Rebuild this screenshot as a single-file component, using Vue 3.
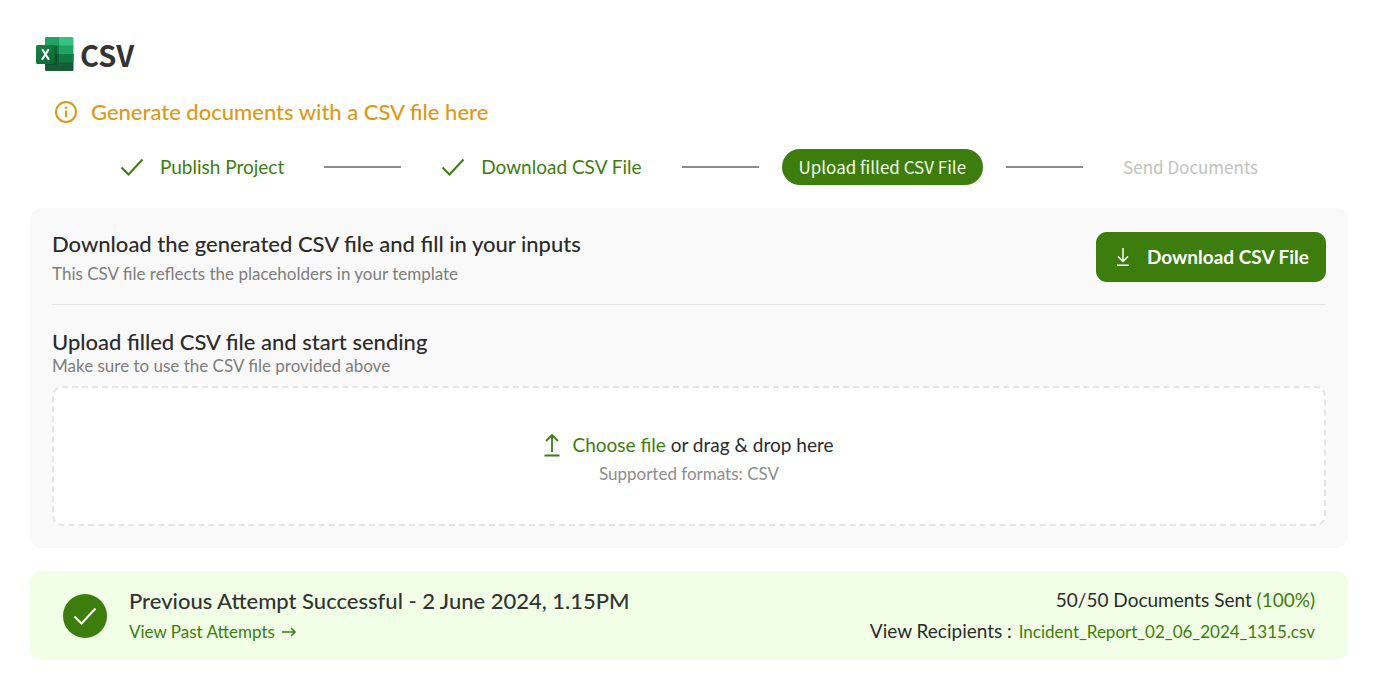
<script setup>
const steps = [
  { label: 'Publish Project', state: 'done' },
  { label: 'Download CSV File', state: 'done' },
  { label: 'Upload filled CSV File', state: 'current' },
  { label: 'Send Documents', state: 'upcoming' },
]
</script>

<template>
  <main class="page">
    <header class="brand">
      <svg class="brand-icon" viewBox="0 0 38 36" aria-hidden="true">
        <defs>
          <clipPath id="book"><rect x="9" y="1" width="28.500" height="34" rx="1.600" /></clipPath>
          <linearGradient id="badge" x1="0" y1="0" x2="1" y2="1">
            <stop offset="0" stop-color="#17844a" />
            <stop offset="1" stop-color="#0b6631" />
          </linearGradient>
        </defs>
        <g clip-path="url(#book)">
          <rect x="9" y="1" width="15" height="9" fill="#21a366" />
          <rect x="23" y="1" width="15" height="9" fill="#33c481" />
          <rect x="9" y="9.500" width="15" height="9" fill="#107c41" />
          <rect x="23" y="9.500" width="15" height="9" fill="#21a366" />
          <rect x="9" y="18" width="29" height="17" fill="#185c37" />
          <rect x="23" y="18" width="15" height="8.500" fill="#107c41" />
          <rect x="9" y="10" width="12" height="19" fill="#000" opacity=".18" />
        </g>
        <rect x="0" y="9" width="19" height="19" rx="1.600" fill="url(#badge)" />
        <path d="M6.200 13.200 L13 23.800 M12.800 13.200 L6 23.800" stroke="#fff" stroke-width="2.100" fill="none" />
      </svg>
      <h1>CSV</h1>
    </header>

    <p class="notice">
      <svg viewBox="0 0 24 24" aria-hidden="true">
        <circle cx="12" cy="12" r="10" fill="none" stroke="currentColor" stroke-width="2" />
        <path d="M12 10.500v6.500" stroke="currentColor" stroke-width="2" />
        <circle cx="12" cy="7.800" r="1.300" fill="currentColor" />
      </svg>
      Generate documents with a CSV file here
    </p>

    <ol class="steps">
      <template v-for="(step, i) in steps" :key="step.label">
        <li v-if="i" class="line" aria-hidden="true"></li>
        <li class="step" :class="step.state">
          <svg v-if="step.state === 'done'" viewBox="0 0 24 24" aria-hidden="true">
            <path d="M1.500 12.500 L8.500 19.500 L22.500 4.500" fill="none" stroke="currentColor" stroke-width="2" />
          </svg>
          <span>{{ step.label }}</span>
        </li>
      </template>
    </ol>

    <section class="card">
      <div class="download">
        <div>
          <h2>Download the generated CSV file and fill in your inputs</h2>
          <p class="hint">This CSV file reflects the placeholders in your template</p>
        </div>
        <button type="button" class="primary">
          <svg viewBox="0 0 16 20" aria-hidden="true">
            <path d="M8 1v13M3 9.500l5 5 5-5M2 18.200h12" fill="none" stroke="currentColor" stroke-width="1.500" />
          </svg>
          Download CSV File
        </button>
      </div>

      <div class="upload">
        <h2>Upload filled CSV file and start sending</h2>
        <p class="hint">Make sure to use the CSV file provided above</p>
        <div class="dropzone">
          <div class="choose">
            <svg viewBox="0 0 16 24" aria-hidden="true">
              <path d="M8 19V2.500M2 8l6-6 6 6M.500 22.500h15" fill="none" stroke="currentColor" stroke-width="1.800" />
            </svg>
            <p><button type="button" class="link">Choose file</button> or drag &amp; drop here</p>
          </div>
          <p class="formats">Supported formats: CSV</p>
        </div>
      </div>
    </section>

    <section class="attempt">
      <span class="tick">
        <svg viewBox="0 0 24 24" aria-hidden="true">
          <path d="M1.500 12.500 L8.500 19.500 L22.500 4.500" fill="none" stroke="currentColor" stroke-width="2" />
        </svg>
      </span>
      <div class="summary">
        <h2>Previous Attempt Successful - 2 June 2024, 1.15PM</h2>
        <a href="#attempts">
          View Past Attempts
          <svg viewBox="0 0 14 12" aria-hidden="true">
            <path d="M0 6h13M9 2l4 4-4 4" fill="none" stroke="currentColor" stroke-width="1.500" />
          </svg>
        </a>
      </div>
      <div class="result">
        <p>50/50 Documents Sent <span class="percent">(100%)</span></p>
        <p>View Recipients : <a href="#recipients">Incident_Report_02_06_2024_1315.csv</a></p>
      </div>
    </section>
  </main>
</template>

<style>
body {
  background: #fff;
}
</style>

<style scoped>
.page {
  padding: 32px 30px;
  font-family: Lato, "Open Sans", sans-serif;
  color: #2b2b2b;
}
h1, h2, p, ol {
  margin: 0;
  padding: 0;
}
svg {
  flex: none;
}
.brand {
  display: flex;
  align-items: center;
  gap: 6px;
  height: 44px;
  padding-left: 6px;
}
.brand-icon {
  width: 38px;
  height: 36px;
}
h1 {
  font: 700 29px/44px "Noto Sans CJK SC", sans-serif;
  color: #333;
}
.notice {
  display: flex;
  align-items: center;
  gap: 13px;
  margin-top: 20px;
  padding-left: 24px;
  font-size: 22px;
  line-height: 32px;
  font-weight: 500;
  color: #dc9a14;
}
.notice svg {
  width: 24px;
  height: 24px;
}
.steps {
  display: flex;
  align-items: center;
  justify-content: center;
  gap: 23px;
  margin-top: 21px;
  list-style: none;
}
.line {
  width: 77px;
  height: 2px;
  background: #8c8c8c;
}
.step {
  display: flex;
  align-items: center;
  gap: 16px;
  padding: 0 17px;
  font-size: 19px;
  line-height: 36px;
  white-space: nowrap;
  color: #3d7d0d;
}
.step svg {
  width: 24px;
  height: 24px;
}
.current,
.upcoming {
  font-family: "Noto Sans CJK SC", sans-serif;
  font-size: 17px;
}
.current {
  border-radius: 18px;
  background: #3d7d0d;
  color: #f4ffec;
}
.upcoming {
  color: #c2c2c2;
}
.card {
  margin-top: 23px;
  padding: 22px;
  border-radius: 12px;
  background: #f9f9f9;
}
.download {
  display: flex;
  align-items: center;
  justify-content: space-between;
  padding-bottom: 20px;
  border-bottom: 1px solid #e6e6e6;
}
h2 {
  font-size: 22px;
  line-height: 28px;
  font-weight: 500;
}
.hint {
  font-size: 17px;
  line-height: 20px;
  color: #7d7d7d;
}
.download .hint {
  margin-top: 6px;
}
.primary {
  display: flex;
  align-items: center;
  gap: 16px;
  height: 50px;
  margin: 0;
  padding: 0 17px 0 19px;
  border: 0;
  border-radius: 11px;
  background: #3d7d0d;
  color: #fff;
  font: 700 19px/24px Lato, sans-serif;
}
.primary svg {
  width: 16px;
  height: 20px;
}
.upload {
  padding-top: 23px;
}
.dropzone {
  display: flex;
  flex-direction: column;
  align-items: center;
  margin-top: 10px;
  padding: 43px 0 40px;
  border: 2px dashed #e4e4e4;
  border-radius: 10px;
  background: #fff;
}
.choose {
  display: flex;
  align-items: center;
  gap: 12px;
  font-size: 19px;
  line-height: 28px;
}
.choose svg {
  width: 16px;
  height: 24px;
  color: #3d7d0d;
}
.link {
  padding: 0;
  border: 0;
  background: none;
  font: inherit;
  color: #3d7d0d;
}
.formats {
  margin-top: 5px;
  font-size: 17px;
  line-height: 20px;
  color: #8c8c8c;
}
.attempt {
  display: flex;
  align-items: center;
  margin-top: 23px;
  padding: 13px 33px;
  border-radius: 12px;
  background: #f0ffe5;
}
.tick {
  display: grid;
  place-items: center;
  width: 44px;
  height: 44px;
  border-radius: 50%;
  background: #3d7d0d;
  color: #fff;
}
.tick svg {
  width: 24px;
  height: 24px;
}
.summary {
  flex: 1;
  margin-left: 22px;
}
.summary h2 {
  line-height: 32px;
  color: #333;
}
.attempt a {
  font-size: 17px;
  color: #3d7d0d;
  text-decoration: none;
}
.summary a {
  display: flex;
  align-items: center;
  gap: 7px;
  width: fit-content;
  line-height: 30px;
}
.summary a svg {
  width: 14px;
  height: 12px;
}
.result {
  font-size: 19px;
  line-height: 31px;
  text-align: right;
}
.percent {
  color: #3d7d0d;
}
.result a {
  margin-left: 2px;
}
</style>
